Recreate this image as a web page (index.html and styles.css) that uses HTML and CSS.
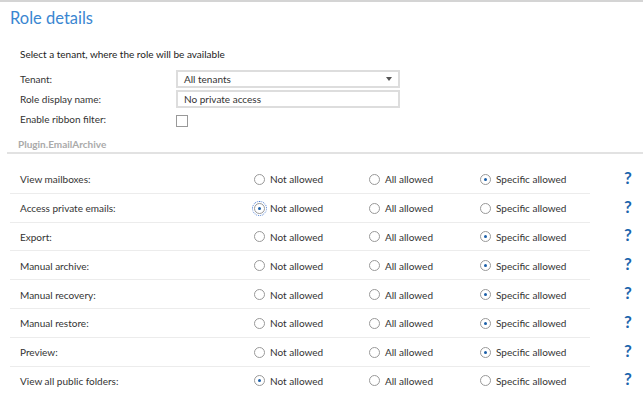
FILE: index.html
```html
<!DOCTYPE html>
<html>
<head>
  <meta charset="UTF-8">
  <title>Role details</title>
  <link rel="stylesheet" href="styles.css">
</head>
<body>
<h1 class="title">Role details</h1>

<div class="general">
  <p class="hint">Select a tenant, where the role will be available</p>
  <div class="form">
    <label class="flabel">Tenant:</label>
    <div class="select">All tenants<span class="caret"></span></div>
    <label class="flabel">Role display name:</label>
    <div class="input">No private access</div>
    <label class="flabel">Enable ribbon filter:</label>
    <div><span class="check"></span></div>
  </div>
</div>

<div class="section">Plugin.EmailArchive</div>

<div id="perms" class="perms"></div>

<script>
const rows = [
  ["View mailboxes:", 2],
  ["Access private emails:", 0],
  ["Export:", 2],
  ["Manual archive:", 2],
  ["Manual recovery:", 2],
  ["Manual restore:", 2],
  ["Preview:", 2],
  ["View all public folders:", 0]
];
const opts = ["Not allowed", "All allowed", "Specific allowed"];

const perms = document.getElementById("perms");
rows.forEach(([label, sel], i) => {
  const row = document.createElement("div");
  row.className = "prow";
  let html = `<div class="plabel">${label}</div>`;
  opts.forEach((o, j) => {
    const on = j === sel ? " on" : "";
    const focus = (i === 1 && j === 0) ? " focus" : "";
    html += `<div class="opt opt${j}"><span class="radio${on}${focus}"></span>${o}</div>`;
  });
  html += `<div class="help">?</div>`;
  row.innerHTML = html;
  perms.appendChild(row);
});
</script>
</body>
</html>
```

FILE: styles.css
```css
body { margin: 0; border-top: 2px solid #d4d4d4; font-family: Lato, "Open Sans", sans-serif; font-size: 10px; color: #333; background: #fff; }
.title { margin: 0; padding: 6px 0 0 10px; font-size: 16.5px; font-weight: normal; color: #3a86d1; height: 28px; }
.general { padding: 12px 0 0 20px; }
.hint { margin: 0 0 10px 0; color: #222; }
.form { display: grid; grid-template-columns: 156px 224px; row-gap: 2px; align-items: center; }
.flabel { color: #333; }
.select, .input { height: 14px; border: 2px solid #ddd; padding: 0 0 0 6px; line-height: 14px; position: relative; color: #333; }
.caret { position: absolute; right: 6px; top: 5px; border-left: 3.5px solid transparent; border-right: 3.5px solid transparent; border-top: 4px solid #555; }
.check { display: inline-block; width: 10px; height: 10px; border: 1px solid #999; margin-top: 5px; vertical-align: middle; }
.section { margin: 11px 0 0 7px; padding: 0 0 2px 11px; border-bottom: 2px solid #e2e2e2; font-weight: bold; color: #aaa; font-size: 10px; }
.perms { padding-top: 11px; }
.prow { display: flex; align-items: center; height: 28.8px; position: relative; }
.prow::after { content: ""; position: absolute; left: 10px; width: 580px; bottom: 0; border-bottom: 1px solid #ececec; }
.prow:last-child::after { display: none; }
.plabel { width: 234px; padding-left: 20px; }
.opt { display: flex; align-items: center; }
.opt0 { width: 115px; }
.opt1 { width: 111px; }
.opt2 { width: 144px; }
.radio { box-sizing: border-box; width: 11px; height: 11px; border: 1px solid #999; border-radius: 50%; margin-right: 5px; position: relative; }
.radio.on::after { content: ""; position: absolute; left: 3px; top: 3px; width: 3px; height: 3px; border-radius: 50%; background: #1c5fa8; }
.radio.focus { outline: 1px dotted #4a7bd0; outline-offset: 1px; }
.help { font-size: 17px; font-weight: bold; color: #1b65ad; margin-top: -4px; }
```
